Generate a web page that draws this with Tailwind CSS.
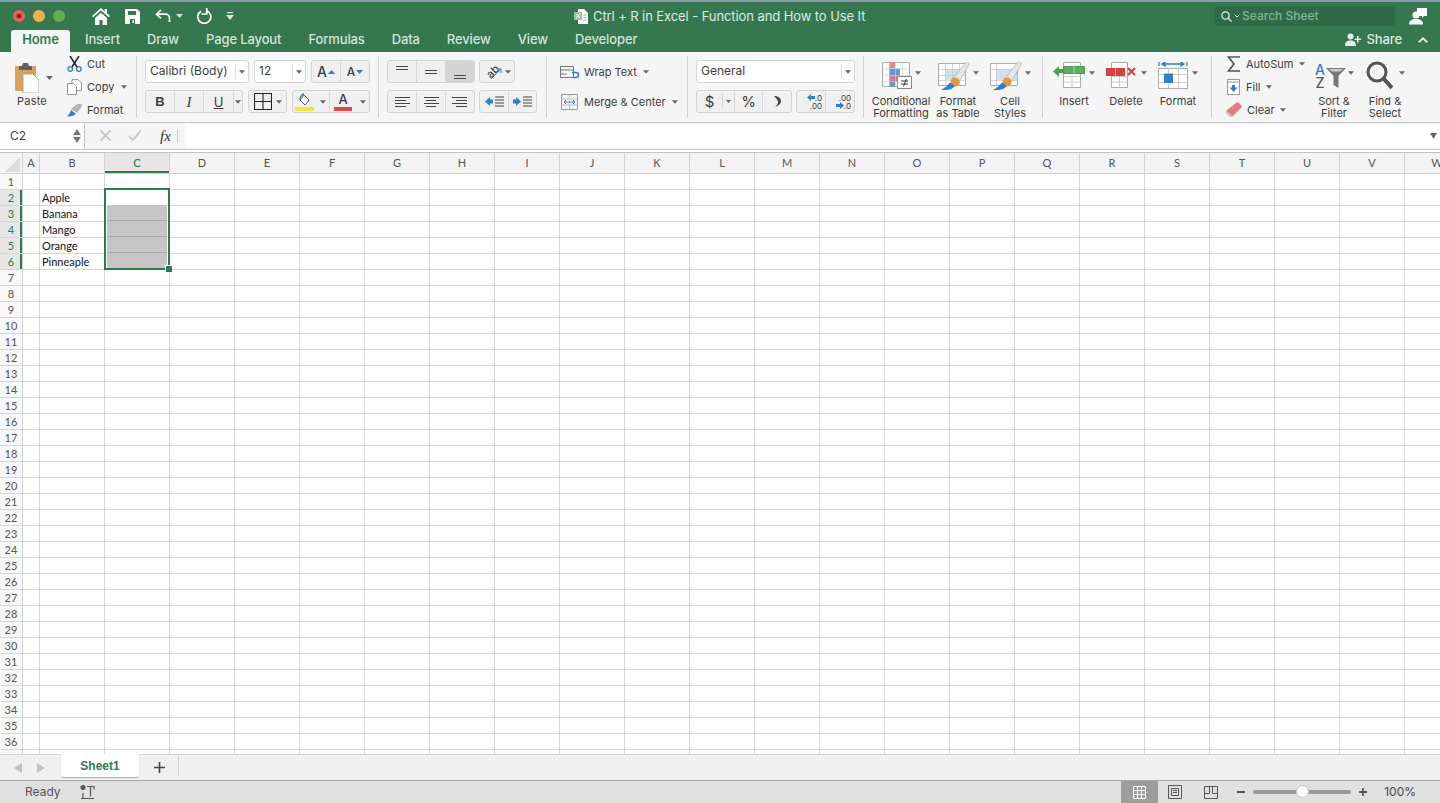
<!DOCTYPE html>
<html lang="en">
<head>
<meta charset="UTF-8" />
<title>Ctrl + R in Excel - Function and How to Use It</title>
<script src="https://cdn.jsdelivr.net/npm/@tailwindcss/browser@4"></script>
</head>
<body class="w-[1440px] h-[803px] overflow-hidden bg-white font-['Inter',sans-serif] text-[#3c3c3c] flex flex-col">

<!-- title bar + tabs -->
<div class="h-[52px] shrink-0 bg-[#35784f] border-t-2 border-[#8a9aa8] flex flex-col text-white">
  <div class="h-[28px] flex items-center">
    <div class="w-[575px] flex items-center">
      <span class="ml-[13px] w-3 h-3 rounded-full bg-[#e0443e] border-[3px] border-[#e8635c] flex items-center justify-center"><span class="w-1 h-1 rounded-full bg-[#7e1a14]"></span></span>
      <span class="ml-2 w-3 h-3 rounded-full bg-[#efb14a]"></span>
      <span class="ml-2 w-3 h-3 rounded-full bg-[#5fb04a]"></span>
      <svg class="ml-[27px] w-[18px] h-[17px]" viewBox="0 0 18 17" fill="#fff"><path d="M9 0 0 8l1.200 1.300L9 2.500l7.800 6.800L18 8l-3-2.700V1h-2.200v2.400zM3 10v7h4.400v-5h3.200v5H15v-7L9 4.700z"/></svg>
      <svg class="ml-[15px] w-[15px] h-[15px]" viewBox="0 0 15 15"><path d="M1 0h11l3 3v11a1 1 0 0 1-1 1H1a1 1 0 0 1-1-1V1a1 1 0 0 1 1-1z" fill="#fff"/><path d="M3 2h8v4H3zM5 10h5v5H5z" fill="#35784f"/><path d="M7.500 11h1.600v3H7.500z" fill="#fff"/></svg>
      <svg class="ml-[15px] w-[16px] h-[14px]" viewBox="0 0 16 14" fill="none" stroke="#fff" stroke-width="1.700"><path d="M6 1 1.500 5.200 6 9.500M2 5.200h8.500a4 4 0 0 1 4 4V13"/></svg>
      <svg class="ml-[5px] w-[7px] h-[4px]" viewBox="0 0 7 4" fill="#cfe0d6"><path d="M0 0h7L3.500 4z"/></svg>
      <svg class="ml-[13px] w-[16px] h-[16px]" viewBox="0 0 16 16" fill="none" stroke="#fff" stroke-width="1.700"><path d="M5 3.200a6.500 6.500 0 1 0 5.500-.5M10.700 0v6H5.500"/></svg>
      <svg class="ml-[14px] w-[8px] h-[8px]" viewBox="0 0 8 8" fill="#dbe8e0"><path d="M1 0h6v1.300H1zM0 3h8L4 8z"/></svg>
    </div>
    <svg class="w-[14px] h-[15px] -ml-[1px] mt-[1px]" viewBox="0 0 14 15"><path d="M4 0h6l4 4v11H4z" fill="#fff"/><path d="M0 3h8v8H0z" fill="#9fc4ae"/><path d="M2 5l4 4M6 5 2 9" stroke="#fff"/><path d="M9.500 6h3M9.500 8.500h3M9.500 11h3" stroke="#9aa"/></svg>
    <span class="ml-[5px] mt-[2px] text-[13px] tracking-[-.09px] text-[#dfeae3] whitespace-nowrap">Ctrl + R in Excel - Function and How to Use It</span>
    <div class="ml-auto w-[180px] h-[20px] rounded-[3px] bg-[#2e6b46] flex items-center pl-[6px]">
      <svg class="w-[11px] h-[11px]" viewBox="0 0 11 11" fill="none" stroke="#e8f0eb" stroke-width="1.200"><circle cx="4.500" cy="4.500" r="3.700"/><path d="m7.200 7.200 3.300 3.300"/></svg>
      <svg class="ml-[2px] w-[6px] h-[4px]" viewBox="0 0 6 4" fill="none" stroke="#e8f0eb"><path d="m.5.500 2.500 2.500L5.500.500"/></svg>
      <span class="ml-[2px] text-[12px] font-medium text-[#7fb697]">Search Sheet</span>
    </div>
    <svg class="ml-[14px] mr-[13px] w-[18px] h-[18px]" viewBox="0 0 18 18" fill="#fff"><path d="M8 1h10v8h-3l-2 2V9H8z"/><circle cx="7" cy="8" r="3.500"/><path d="M0 17.500c0-4 3-5.500 7-5.500s7 1.500 7 5.500z"/></svg>
  </div>
  <div class="h-[22px] flex items-end text-[13px] font-medium tracking-[-.12px] text-[#d5e3da]">
    <div class="ml-[11px] w-[59px] h-[22px] pb-[2px] rounded-t-[3px] bg-[#f5f5f5] text-[#2f7a4f] font-semibold flex items-center justify-center">Home</div>
    <div class="ml-[15px] h-[22px] pb-[2px] flex items-center gap-[27px]">
      <span>Insert</span><span>Draw</span><span>Page Layout</span><span>Formulas</span><span>Data</span><span>Review</span><span>View</span><span>Developer</span>
    </div>
    <div class="ml-auto h-[22px] pb-[3px] flex items-center">
      <svg class="w-[17px] h-[13px]" viewBox="0 0 17 13" fill="#e6efe9"><circle cx="5.500" cy="3.500" r="3"/><path d="M0 13c0-4 2-5.500 5.500-5.500S11 9 11 13zM12 3h1.600v2.400H16V7h-2.400v2.400H12V7H9.600V5.400H12z"/></svg>
      <span class="ml-[5px] text-[#dfeae3]">Share</span>
      <svg class="ml-[16px] mr-[12px] w-[10px] h-[6px]" viewBox="0 0 10 6" fill="none" stroke="#e6efe9" stroke-width="1.800"><path d="m.7 5.300 4.300-4 4.300 4"/></svg>
    </div>
  </div>
</div>

<!-- ribbon -->
<div class="h-[70px] shrink-0 bg-[#f5f5f5] flex text-[11px] leading-[12px] text-[#3c3c3c]">

  <!-- clipboard -->
  <div class="w-[136px] flex">
    <div class="w-[64px] flex flex-col items-center">
      <div class="h-[35px] mt-[8px] w-full pl-[15px] flex items-center">
        <svg class="w-[24px] h-[30px]" viewBox="0 0 24 30"><rect x="0" y="3" width="21" height="25" rx="1" fill="#d9a25c"/><path d="M4 3h3l1-3h5l1 3h3v4H4z" fill="#5f5f5f"/><path d="M8 11h10l6 6v13H8z" fill="#fff" stroke="#999" stroke-width=".8"/></svg>
        <svg class="ml-[7px] w-[7px] h-[4px]" viewBox="0 0 7 4" fill="#666"><path d="M0 0h7L3.500 4z"/></svg>
      </div>
      <span class="tracking-[.2px]">Paste</span>
    </div>
    <div class="flex flex-col pl-[3px]">
      <div class="h-[23px] flex items-center"><svg class="w-[15px] h-[16px]" viewBox="0 0 15 16" fill="none"><path d="M3 0l7 11M12 0 5 11" stroke="#222" stroke-width="1.500"/><circle cx="3.200" cy="13" r="2.300" stroke="#2f7fd0" stroke-width="1.300"/><circle cx="11.800" cy="13" r="2.300" stroke="#2f7fd0" stroke-width="1.300"/></svg><span class="ml-[5px]">Cut</span></div>
      <div class="h-[23px] flex items-center"><svg class="w-[15px] h-[16px]" viewBox="0 0 15 16" fill="#fff" stroke="#8a8a8a" stroke-width=".9"><path d="M5 .500h6l3.500 3.500v7.500H5z"/><path d="M.5 4.500h6l3 3v8h-9z"/></svg><span class="ml-[5px]">Copy</span><svg class="ml-[7px] w-[6px] h-[4px]" viewBox="0 0 7 4" fill="#666"><path d="M0 0h7L3.500 4z"/></svg></div>
      <div class="h-[23px] flex items-center"><svg class="w-[16px] h-[14px]" viewBox="0 0 16 14"><path d="M0 13c2-1 3-3 4-6l5 4c-3 2-6 3-9 2z" fill="#2f7fd0"/><path d="M4 6 10 1l5 0-1 4-4 5z" fill="#b4b4b4"/></svg><span class="ml-[4px]">Format</span></div>
    </div>
  </div>
  <div class="w-px h-[62px] my-[4px] bg-[#d2d2d2]"></div>

  <!-- font -->
  <div class="w-[241px] pl-[8px] pt-[8px] flex flex-col gap-[7px] text-[12px]">
    <div class="h-[23px] flex gap-[5px]">
      <div class="w-[104px] pb-[2px] rounded-[3px] border border-[#d4d4d4] bg-white flex items-center pl-[4px]">Calibri (Body)<span class="ml-auto mt-[2px] w-[13px] h-[15px] border-l border-[#ddd] flex items-center justify-center"><svg class="w-[6px] h-[4px]" viewBox="0 0 7 4" fill="#666"><path d="M0 0h7L3.500 4z"/></svg></span></div>
      <div class="w-[52px] pb-[2px] rounded-[3px] border border-[#d4d4d4] bg-white flex items-center pl-[4px]">12<span class="ml-auto mt-[2px] w-[13px] h-[15px] border-l border-[#ddd] flex items-center justify-center"><svg class="w-[6px] h-[4px]" viewBox="0 0 7 4" fill="#666"><path d="M0 0h7L3.500 4z"/></svg></span></div>
      <div class="w-[59px] rounded-[3px] border border-[#d4d4d4] bg-[#f0f0f0] flex">
        <div class="w-[29px] border-r border-[#d8d8d8] flex items-center justify-center text-[14px] font-medium">A<svg class="ml-[1px] w-[7px] h-[4px]" viewBox="0 0 7 4" fill="#2f7fd0"><path d="M0 4h7L3.500 0z"/></svg></div>
        <div class="flex-1 flex items-center justify-center text-[12px] font-medium">A<svg class="ml-[1px] w-[7px] h-[4px]" viewBox="0 0 7 4" fill="#2f7fd0"><path d="M0 0h7L3.500 4z"/></svg></div>
      </div>
    </div>
    <div class="h-[23px] flex gap-[5px]">
      <div class="w-[98px] rounded-[3px] border border-[#d4d4d4] bg-[#f0f0f0] flex text-[13px]">
        <div class="w-[29px] border-r border-[#d8d8d8] flex items-center justify-center font-bold font-['Liberation_Sans']">B</div>
        <div class="w-[29px] border-r border-[#d8d8d8] flex items-center justify-center italic font-['Liberation_Serif'] text-[15px]">I</div>
        <div class="w-[29px] flex items-center justify-center underline">U</div>
        <div class="flex-1 border-l border-[#d8d8d8] flex items-center justify-center"><svg class="w-[6px] h-[4px]" viewBox="0 0 7 4" fill="#666"><path d="M0 0h7L3.500 4z"/></svg></div>
      </div>
      <div class="w-[39px] rounded-[3px] border border-[#d4d4d4] bg-[#f0f0f0] flex items-center pl-[5px]">
        <svg class="w-[18px] h-[17px]" viewBox="0 0 18 17" fill="none" stroke="#222" stroke-width="1.100"><path d="M.5.500h17v16H.5zM9 .5v16M.5 8.500h17"/></svg>
        <svg class="ml-auto mr-[4px] w-[6px] h-[4px]" viewBox="0 0 7 4" fill="#666"><path d="M0 0h7L3.500 4z"/></svg>
      </div>
      <div class="w-[78px] rounded-[3px] border border-[#d4d4d4] bg-[#f0f0f0] flex">
        <div class="w-[37px] border-r border-[#d8d8d8] flex items-center pl-[2px]">
          <svg class="w-[19px] h-[18px]" viewBox="0 0 19 18"><path d="M9 2l5 5-4 5-5-5z" fill="#fff" stroke="#445" stroke-width=".9"/><path d="M5 7c0-3 2-6 4-6" stroke="#2f7fd0" stroke-width="1.400" fill="none"/><path d="M0 14h19v4H0z" fill="#f2e63c"/></svg>
          <svg class="ml-auto mr-[3px] w-[6px] h-[4px]" viewBox="0 0 7 4" fill="#666"><path d="M0 0h7L3.500 4z"/></svg>
        </div>
        <div class="flex-1 flex items-center pl-[4px]">
          <div class="w-[18px] flex flex-col items-center text-[13px] leading-[13px] font-medium">A<span class="w-[18px] h-[4px] bg-[#e04a46] mt-[1px]"></span></div>
          <svg class="ml-auto mr-[3px] w-[6px] h-[4px]" viewBox="0 0 7 4" fill="#666"><path d="M0 0h7L3.500 4z"/></svg>
        </div>
      </div>
    </div>
  </div>
  <div class="w-px h-[62px] my-[4px] bg-[#d2d2d2]"></div>

  <!-- alignment -->
  <div class="w-[167px] pl-[8px] pt-[8px] flex flex-col gap-[7px]">
    <div class="h-[23px] flex gap-[4px]">
      <div class="w-[88px] rounded-[3px] border border-[#d4d4d4] bg-[#f0f0f0] flex">
        <div class="w-[29px] border-r border-[#d8d8d8] flex flex-col items-center gap-[2px] pt-[5px]"><span class="w-3 h-px bg-[#444]"></span><span class="w-3 h-px bg-[#444]"></span></div>
        <div class="w-[29px] border-r border-[#d8d8d8] flex flex-col items-center justify-center gap-[2px]"><span class="w-3 h-px bg-[#444]"></span><span class="w-3 h-px bg-[#444]"></span></div>
        <div class="flex-1 rounded-r-[3px] bg-[#d4d4d4] flex flex-col items-center justify-end gap-[2px] pb-[3px]"><span class="w-3 h-px bg-[#444]"></span><span class="w-3 h-px bg-[#444]"></span></div>
      </div>
      <div class="w-[36px] rounded-[3px] border border-[#d4d4d4] bg-[#f0f0f0] flex items-center pl-[6px]">
        <div class="relative w-[16px] h-[16px]">
          <span class="block -rotate-45 text-[11px] leading-[13px] text-[#444] font-medium">ab</span>
          <svg class="absolute left-0 top-0 w-[16px] h-[16px]" viewBox="0 0 16 16" fill="none" stroke="#2f7fd0"><path d="M5 15 15 5M11 5h4v4"/></svg>
        </div>
        <svg class="ml-[3px] w-[6px] h-[4px]" viewBox="0 0 7 4" fill="#666"><path d="M0 0h7L3.500 4z"/></svg>
      </div>
    </div>
    <div class="h-[23px] flex gap-[4px]">
      <div class="w-[88px] rounded-[3px] border border-[#d4d4d4] bg-[#f0f0f0] flex">
        <div class="w-[29px] border-r border-[#d8d8d8] flex flex-col items-start justify-center gap-[2px] pl-[7px]"><span class="w-[15px] h-px bg-[#444]"></span><span class="w-[11px] h-px bg-[#444]"></span><span class="w-[15px] h-px bg-[#444]"></span><span class="w-[11px] h-px bg-[#444]"></span></div>
        <div class="w-[29px] border-r border-[#d8d8d8] flex flex-col items-center justify-center gap-[2px]"><span class="w-[15px] h-px bg-[#444]"></span><span class="w-[10px] h-px bg-[#444]"></span><span class="w-[15px] h-px bg-[#444]"></span><span class="w-[10px] h-px bg-[#444]"></span></div>
        <div class="flex-1 flex flex-col items-end justify-center gap-[2px] pr-[7px]"><span class="w-[15px] h-px bg-[#444]"></span><span class="w-[11px] h-px bg-[#444]"></span><span class="w-[15px] h-px bg-[#444]"></span><span class="w-[11px] h-px bg-[#444]"></span></div>
      </div>
      <div class="w-[58px] rounded-[3px] border border-[#d4d4d4] bg-[#f0f0f0] flex">
        <div class="w-[29px] border-r border-[#d8d8d8] flex items-center justify-center"><svg class="w-[19px] h-[11px]" viewBox="0 0 19 11"><path d="M0 5.500 5 1v2.500h3v4H5V10z" fill="#2f7fd0"/><path d="M10 1h9M10 4h9M10 7h9M10 10h9" stroke="#444"/></svg></div>
        <div class="flex-1 flex items-center justify-center"><svg class="w-[19px] h-[11px]" viewBox="0 0 19 11"><path d="M8 5.500 3 1v2.500H0v4h3V10z" fill="#2f7fd0"/><path d="M10 1h9M10 4h9M10 7h9M10 10h9" stroke="#444"/></svg></div>
      </div>
    </div>
  </div>
  <div class="w-px h-[62px] my-[4px] bg-[#d2d2d2]"></div>

  <!-- wrap / merge -->
  <div class="w-[140px] pl-[13px] pt-[8px] flex flex-col gap-[7px]">
    <div class="h-[23px] flex items-center"><svg class="w-[21px] h-[14px]" viewBox="0 0 21 14" fill="none"><path d="M.5 1.500h13v11H.5zM.5 5h13M.5 9h6" stroke="#777"/><path d="M12 7.500h4a2 2 0 0 1 0 5h-3" stroke="#2f7fd0" stroke-width="1.600"/></svg><span class="ml-[3px]">Wrap Text</span><svg class="ml-[6px] w-[6px] h-[4px]" viewBox="0 0 7 4" fill="#666"><path d="M0 0h7L3.500 4z"/></svg></div>
    <div class="h-[23px] flex items-center"><svg class="ml-[1px] w-[17px] h-[16px]" viewBox="0 0 17 16" fill="none"><path d="M.5.500h16v15H.5z" stroke="#999"/><path d="M.5 5h16M.5 11h16M8.500 .5V5M8.500 11v4.500" stroke="#bbb"/><path d="M3.500 8h10M3 8l2-2M3 8l2 2M14 8l-2-2M14 8l-2 2" stroke="#2f7fd0"/></svg><span class="ml-[6px]">Merge &amp; Center</span><svg class="ml-[6px] w-[6px] h-[4px]" viewBox="0 0 7 4" fill="#666"><path d="M0 0h7L3.500 4z"/></svg></div>
  </div>
  <div class="w-px h-[62px] my-[4px] bg-[#d2d2d2]"></div>

  <!-- number -->
  <div class="w-[175px] pl-[8px] pt-[8px] flex flex-col gap-[7px] text-[12px]">
    <div class="w-[159px] h-[23px] pb-[2px] rounded-[3px] border border-[#d4d4d4] bg-white flex items-center pl-[4px]">General<span class="ml-auto mt-[2px] w-[13px] h-[15px] border-l border-[#ddd] flex items-center justify-center"><svg class="w-[6px] h-[4px]" viewBox="0 0 7 4" fill="#666"><path d="M0 0h7L3.500 4z"/></svg></span></div>
    <div class="h-[23px] flex gap-[4px]">
      <div class="w-[96px] rounded-[3px] border border-[#d4d4d4] bg-[#f0f0f0] flex text-[15px]">
        <div class="w-[25px] flex items-center justify-center">$</div>
        <div class="w-[12px] border-l border-[#d8d8d8] my-[3px] flex items-center justify-center"><svg class="w-[5px] h-[3px]" viewBox="0 0 7 4" fill="#666"><path d="M0 0h7L3.500 4z"/></svg></div>
        <div class="w-[29px] border-x border-[#d8d8d8] flex items-center justify-center">%</div>
        <div class="flex-1 flex items-center justify-center"><svg class="w-[7px] h-[11px]" viewBox="0 0 7 11" fill="#444"><path d="M0 0c4 0 7 2 7 5 0 3-3 5-6 6 2-2 3-3 3-5S2 2 0 0z"/></svg></div>
      </div>
      <div class="w-[59px] rounded-[3px] border border-[#d4d4d4] bg-[#f0f0f0] flex text-[8px] leading-[8px]">
        <div class="w-[29px] border-r border-[#d8d8d8] flex flex-col justify-center items-end pr-[3px]"><span class="flex items-center"><svg class="w-[8px] h-[7px]" viewBox="0 0 8 7" fill="#2f7fd0"><path d="M0 3.500 4 0v2h4v3H4v2z"/></svg>.0</span><span>.00</span></div>
        <div class="flex-1 flex flex-col justify-center items-end pr-[3px]"><span>.00</span><span class="flex items-center"><svg class="w-[8px] h-[7px]" viewBox="0 0 8 7" fill="#2f7fd0"><path d="M8 3.500 4 0v2H0v3h4v2z"/></svg>.0</span></div>
      </div>
    </div>
  </div>
  <div class="w-px h-[62px] my-[4px] bg-[#d2d2d2]"></div>

  <!-- styles -->
  <div class="w-[178px] pl-[7px] flex text-center">
    <div class="w-[60px] flex flex-col items-center">
      <div class="h-[35px] mt-[8px] flex items-start gap-[3px]">
        <svg class="mt-[2px] w-[30px] h-[27px]" viewBox="0 0 30 27"><path d="M.5.500h27v24H.5z" fill="#fff" stroke="#aaa"/><path d="M7 .5h6v6H7z" fill="#dd8c88"/><path d="M7 6.500h11V14H7z" fill="#5b9bdc"/><path d="M7 14h11v6H7z" fill="#dd7c78"/><path d="M7 20h6v4.500H7z" fill="#5b9bdc"/><path d="M7.500.5v24M13.500.5v24M20.500.5v24M.5 6.500h27M.5 13.500h27M.5 19.500h27" stroke="#ccc" stroke-width=".7" fill="none"/><path d="M15.500 14.500h14v12h-14z" fill="#fff" stroke="#888"/><path d="M19 19h7M19 22h7M24.500 17l-3 7.500" stroke="#333" fill="none"/></svg>
        <svg class="mt-[11px] w-[6px] h-[4px]" viewBox="0 0 7 4" fill="#666"><path d="M0 0h7L3.500 4z"/></svg>
      </div>
      <span>Conditional Formatting</span>
    </div>
    <div class="w-[54px] flex flex-col items-center">
      <div class="h-[35px] mt-[8px] flex items-start gap-[3px]">
        <svg class="mt-[2px] w-[32px] h-[28px]" viewBox="0 0 32 28"><path d="M.5 1.500h27v22H.5z" fill="#fff" stroke="#aaa"/><path d="M7 7h14v11H7z" fill="#cfe2ee"/><path d="M7.500 1.500v22M14.500 1.500v22M21.500 1.500v22M.5 7.500h27M.5 13.500h27M.5 18.500h27" stroke="#c4c4c4" stroke-width=".7" fill="none"/><path d="M28 0c2-.5 3 .5 3 2.500L21 20l-6-3.500z" fill="#e6e6e6" stroke="#a0a0a0" stroke-width=".6"/><circle cx="17" cy="20" r="4.500" fill="#e39a3c"/><path d="M3 28c5 .5 11 0 14-4l-5-3.500C10 23 7 26 3 28z" fill="#2f7fd0"/></svg>
        <svg class="mt-[11px] w-[6px] h-[4px]" viewBox="0 0 7 4" fill="#666"><path d="M0 0h7L3.500 4z"/></svg>
      </div>
      <span>Format<br />as Table</span>
    </div>
    <div class="w-[50px] flex flex-col items-center">
      <div class="h-[35px] mt-[8px] flex items-start gap-[3px]">
        <svg class="mt-[2px] w-[32px] h-[28px]" viewBox="0 0 32 28"><path d="M.5 1.500h27v22H.5z" fill="#fff" stroke="#aaa"/><path d="M6 7h21v11H6z" fill="#cfe2ee"/><path d="M.5 7.500h27M.5 18.500h27M6.500 1.500v22" stroke="#c4c4c4" stroke-width=".7" fill="none"/><path d="M28 0c2-.5 3 .5 3 2.500L21 20l-6-3.500z" fill="#e6e6e6" stroke="#a0a0a0" stroke-width=".6"/><circle cx="17" cy="20" r="4.500" fill="#e39a3c"/><path d="M3 28c5 .5 11 0 14-4l-5-3.500C10 23 7 26 3 28z" fill="#2f7fd0"/></svg>
        <svg class="mt-[11px] w-[6px] h-[4px]" viewBox="0 0 7 4" fill="#666"><path d="M0 0h7L3.500 4z"/></svg>
      </div>
      <span>Cell<br />Styles</span>
    </div>
  </div>
  <div class="w-px h-[62px] my-[4px] bg-[#d2d2d2]"></div>

  <!-- cells -->
  <div class="w-[168px] pl-[5px] flex text-center">
    <div class="w-[52px] flex flex-col items-center">
      <div class="h-[35px] mt-[8px] flex items-start gap-[4px]">
        <svg class="w-[32px] h-[26px] mt-[2px]" viewBox="0 0 32 26"><path d="M10.500.5h17v25h-17z" fill="#fff" stroke="#aaa"/><path d="M10.500 14.500h17M10.500 20h17M19 14.500v11" stroke="#ccc"/><path d="M0 9.500 6 4v3h4V4h22v8H10v-1H6v4z" fill="#4ca04e"/><path d="M11.500 5h19v6h-19z" fill="#5fae5f"/><path d="M21 4v8" stroke="#a8d8a8"/></svg>
        <svg class="mt-[11px] w-[6px] h-[4px]" viewBox="0 0 7 4" fill="#666"><path d="M0 0h7L3.500 4z"/></svg>
      </div>
      <span>Insert</span>
    </div>
    <div class="w-[52px] flex flex-col items-center">
      <div class="h-[35px] mt-[8px] flex items-start gap-[5px]">
        <svg class="w-[30px] h-[26px] mt-[2px]" viewBox="0 0 30 26"><path d="M5.500.5h16v25h-16z" fill="#fff" stroke="#aaa"/><path d="M5.500 14.500h16M5.500 20h16M13.500 14.500v11" stroke="#ccc"/><path d="M0 6h19v8H0z" fill="#d8413e"/><path d="M9.500 6v8" stroke="#eea0a0"/><path d="M22 6l7 7M29 6l-7 7" stroke="#d8413e" stroke-width="2.200"/></svg>
        <svg class="mt-[11px] w-[6px] h-[4px]" viewBox="0 0 7 4" fill="#666"><path d="M0 0h7L3.500 4z"/></svg>
      </div>
      <span>Delete</span>
    </div>
    <div class="w-[52px] flex flex-col items-center">
      <div class="h-[35px] mt-[8px] flex items-start gap-[4px]">
        <svg class="w-[30px] h-[27px] mt-[2px]" viewBox="0 0 30 27"><path d="M.5 6.500h29v20H.5z" fill="#fff" stroke="#aaa"/><path d="M10.500 6.500v20M20.500 6.500v20M.5 12.500h29M.5 20.500h29" stroke="#ccc" fill="none"/><path d="M6 11.500h9v9.500H6z" fill="#2f7fd0"/><path d="M1 0v4M29 0v4M4 2h22M4 2l3-2v4zM26 2l-3-2v4z" stroke="#2f7fd0" stroke-width="1.300"/></svg>
        <svg class="mt-[11px] w-[6px] h-[4px]" viewBox="0 0 7 4" fill="#666"><path d="M0 0h7L3.500 4z"/></svg>
      </div>
      <span>Format</span>
    </div>
  </div>
  <div class="w-px h-[62px] my-[4px] bg-[#d2d2d2]"></div>

  <!-- editing -->
  <div class="flex-1 flex text-center">
    <div class="w-[100px] pl-[15px] flex flex-col text-left">
      <div class="h-[23px] flex items-center"><svg class="w-[13px] h-[16px]" viewBox="0 0 13 16" fill="none" stroke="#555" stroke-width="1.700"><path d="M13 1H1.500L7 8l-5.500 7H13"/></svg><span class="ml-[6px]">AutoSum</span><svg class="ml-[6px] w-[6px] h-[4px]" viewBox="0 0 7 4" fill="#666"><path d="M0 0h7L3.500 4z"/></svg></div>
      <div class="h-[23px] flex items-center"><svg class="w-[13px] h-[16px]" viewBox="0 0 13 16"><path d="M.5.500h12v15H.5z" fill="#fff" stroke="#999"/><path d="M.5 3h12" stroke="#999"/><path d="M6.500 13 2.500 8.500H5V6h3v2.500h2.500z" fill="#2f7fd0"/></svg><span class="ml-[6px]">Fill</span><svg class="ml-[5px] w-[6px] h-[4px]" viewBox="0 0 7 4" fill="#666"><path d="M0 0h7L3.500 4z"/></svg></div>
      <div class="h-[23px] flex items-center"><svg class="-ml-[1px] w-[16px] h-[16px]" viewBox="0 0 16 16"><path d="M10 1c1-1 2-1 3 0l2 2c1 1 1 2 0 3l-8 8c-1 1-3 1-4 0l-2-2c-1-1-1-3 0-4z" fill="#e0807e"/><path d="M6 14 1 9l-.5 2.500L4 15z" fill="#c9c9c9"/></svg><span class="ml-[5px]">Clear</span><svg class="ml-[5px] w-[6px] h-[4px]" viewBox="0 0 7 4" fill="#666"><path d="M0 0h7L3.500 4z"/></svg></div>
    </div>
    <div class="w-[44px] flex flex-col items-center">
      <div class="h-[35px] mt-[8px] flex items-start">
        <div class="flex flex-col items-center mt-[3px] text-[14px] leading-[13px] w-[12px]"><span class="text-[#2f7fd0] font-medium">A</span><span class="font-medium text-[#555]">Z</span></div>
        <svg class="mt-[8px] w-[20px] h-[20px]" viewBox="0 0 20 20" fill="#777"><path d="M0 0h20l-7.500 8v12l-5-3V8z"/><path d="M3 1h14l-3 2.500H6z" fill="#ccc"/></svg>
        <svg class="mt-[11px] ml-[2px] w-[6px] h-[4px]" viewBox="0 0 7 4" fill="#666"><path d="M0 0h7L3.500 4z"/></svg>
      </div>
      <span>Sort &amp;<br />Filter</span>
    </div>
    <div class="ml-[4px] w-[50px] flex flex-col items-center">
      <div class="h-[35px] mt-[8px] flex items-start">
        <svg class="mt-[1px] w-[27px] h-[29px]" viewBox="0 0 27 29" fill="none" stroke="#555"><circle cx="11" cy="11" r="9" stroke-width="3"/><path d="M18 18l8 9" stroke-width="4"/></svg>
        <svg class="mt-[11px] ml-[6px] w-[6px] h-[4px]" viewBox="0 0 7 4" fill="#666"><path d="M0 0h7L3.500 4z"/></svg>
      </div>
      <span>Find &amp;<br />Select</span>
    </div>
  </div>
</div>

<!-- formula bar -->
<div class="h-[28px] shrink-0 border-y border-[#c4c4c4] bg-[#f5f5f5] flex items-stretch">
  <div class="w-[85px] bg-white border-r border-[#c4c4c4] flex items-center pl-[10px] text-[12px]">C2
    <div class="ml-auto mr-[3px] flex flex-col gap-[2px]"><svg class="w-[8px] h-[6px]" viewBox="0 0 8 6" fill="#777"><path d="M0 6h8L4 0z"/></svg><svg class="w-[8px] h-[6px]" viewBox="0 0 8 6" fill="#777"><path d="M0 0h8L4 6z"/></svg></div>
  </div>
  <svg class="ml-[15px] mt-[7px] w-[11px] h-[11px]" viewBox="0 0 11 11" stroke="#c6c6c6" stroke-width="1.800"><path d="m.5.500 10 10M10.500.5l-10 10"/></svg>
  <svg class="ml-[17px] mt-[7px] w-[14px] h-[11px]" viewBox="0 0 14 11" fill="none" stroke="#c6c6c6" stroke-width="1.800"><path d="m1 6 4 4 8-9.500"/></svg>
  <span class="ml-[18px] mt-[4px] text-[15px] leading-[18px] italic font-['Liberation_Serif'] text-[#333]">fx</span>
  <div class="ml-[6px] my-[6px] w-px bg-[#ccc]"></div>
  <div class="flex-1 my-[1px] ml-[7px] bg-white flex items-center justify-end pr-[3px]"><svg class="w-[7px] h-[6px]" viewBox="0 0 7 6" fill="#666"><path d="M0 0h7L3.500 6z"/></svg></div>
</div>

<!-- sheet -->
<div class="h-[2px] shrink-0"></div>
<div class="h-[602px] shrink-0 border-t border-[#c4c4c4] flex flex-col font-['Lato',sans-serif] text-[11px] overflow-hidden">
  <div class="h-[21px] shrink-0 flex bg-[#f3f3f3] border-b border-[#d2d2d2] text-center leading-[20px] text-[#555]">
    <div class="w-[23px] shrink-0 border-r border-[#d2d2d2] flex items-end justify-end pr-[2px] pb-[1px]"><svg class="w-[15px] h-[15px]" viewBox="0 0 15 15" fill="#dcdcdc"><path d="M15 0v15H0z"/></svg></div>
    <div class="w-[17px] shrink-0 border-r border-[#d2d2d2]">A</div>
    <div class="w-[65px] shrink-0 border-r border-[#d2d2d2]">B</div>
    <div class="w-[65px] shrink-0 border-r border-[#d2d2d2] bg-[#e6e6e6] text-[#2f7a4f] font-medium shadow-[inset_0_-2px_0_#2f7a4f]">C</div>
    <div class="w-[65px] shrink-0 border-r border-[#d2d2d2]">D</div>
    <div class="w-[65px] shrink-0 border-r border-[#d2d2d2]">E</div>
    <div class="w-[65px] shrink-0 border-r border-[#d2d2d2]">F</div>
    <div class="w-[65px] shrink-0 border-r border-[#d2d2d2]">G</div>
    <div class="w-[65px] shrink-0 border-r border-[#d2d2d2]">H</div>
    <div class="w-[65px] shrink-0 border-r border-[#d2d2d2]">I</div>
    <div class="w-[65px] shrink-0 border-r border-[#d2d2d2]">J</div>
    <div class="w-[65px] shrink-0 border-r border-[#d2d2d2]">K</div>
    <div class="w-[65px] shrink-0 border-r border-[#d2d2d2]">L</div>
    <div class="w-[65px] shrink-0 border-r border-[#d2d2d2]">M</div>
    <div class="w-[65px] shrink-0 border-r border-[#d2d2d2]">N</div>
    <div class="w-[65px] shrink-0 border-r border-[#d2d2d2]">O</div>
    <div class="w-[65px] shrink-0 border-r border-[#d2d2d2]">P</div>
    <div class="w-[65px] shrink-0 border-r border-[#d2d2d2]">Q</div>
    <div class="w-[65px] shrink-0 border-r border-[#d2d2d2]">R</div>
    <div class="w-[65px] shrink-0 border-r border-[#d2d2d2]">S</div>
    <div class="w-[65px] shrink-0 border-r border-[#d2d2d2]">T</div>
    <div class="w-[65px] shrink-0 border-r border-[#d2d2d2]">U</div>
    <div class="w-[65px] shrink-0 border-r border-[#d2d2d2]">V</div>
    <div class="w-[65px] shrink-0 border-r border-[#d2d2d2]">W</div>
  </div>
  <div class="flex-1 flex min-h-0">
    <div class="w-[23px] shrink-0 bg-[#f8f8f8] border-r border-[#d2d2d2] text-center leading-[15px] text-[#555]">
      <div class="h-4 border-b border-[#d6d6d6]">1</div>
      <div class="h-4 border-b border-[#d6d6d6] bg-[#e6e6e6] text-[#2f7a4f] shadow-[inset_-2px_0_0_#2f7a4f]">2</div>
      <div class="h-4 border-b border-[#d6d6d6] bg-[#e6e6e6] text-[#2f7a4f] shadow-[inset_-2px_0_0_#2f7a4f]">3</div>
      <div class="h-4 border-b border-[#d6d6d6] bg-[#e6e6e6] text-[#2f7a4f] shadow-[inset_-2px_0_0_#2f7a4f]">4</div>
      <div class="h-4 border-b border-[#d6d6d6] bg-[#e6e6e6] text-[#2f7a4f] shadow-[inset_-2px_0_0_#2f7a4f]">5</div>
      <div class="h-4 border-b border-[#d6d6d6] bg-[#e6e6e6] text-[#2f7a4f] shadow-[inset_-2px_0_0_#2f7a4f]">6</div>
      <div class="h-4 border-b border-[#d6d6d6]">7</div>
      <div class="h-4 border-b border-[#d6d6d6]">8</div>
      <div class="h-4 border-b border-[#d6d6d6]">9</div>
      <div class="h-4 border-b border-[#d6d6d6]">10</div>
      <div class="h-4 border-b border-[#d6d6d6]">11</div>
      <div class="h-4 border-b border-[#d6d6d6]">12</div>
      <div class="h-4 border-b border-[#d6d6d6]">13</div>
      <div class="h-4 border-b border-[#d6d6d6]">14</div>
      <div class="h-4 border-b border-[#d6d6d6]">15</div>
      <div class="h-4 border-b border-[#d6d6d6]">16</div>
      <div class="h-4 border-b border-[#d6d6d6]">17</div>
      <div class="h-4 border-b border-[#d6d6d6]">18</div>
      <div class="h-4 border-b border-[#d6d6d6]">19</div>
      <div class="h-4 border-b border-[#d6d6d6]">20</div>
      <div class="h-4 border-b border-[#d6d6d6]">21</div>
      <div class="h-4 border-b border-[#d6d6d6]">22</div>
      <div class="h-4 border-b border-[#d6d6d6]">23</div>
      <div class="h-4 border-b border-[#d6d6d6]">24</div>
      <div class="h-4 border-b border-[#d6d6d6]">25</div>
      <div class="h-4 border-b border-[#d6d6d6]">26</div>
      <div class="h-4 border-b border-[#d6d6d6]">27</div>
      <div class="h-4 border-b border-[#d6d6d6]">28</div>
      <div class="h-4 border-b border-[#d6d6d6]">29</div>
      <div class="h-4 border-b border-[#d6d6d6]">30</div>
      <div class="h-4 border-b border-[#d6d6d6]">31</div>
      <div class="h-4 border-b border-[#d6d6d6]">32</div>
      <div class="h-4 border-b border-[#d6d6d6]">33</div>
      <div class="h-4 border-b border-[#d6d6d6]">34</div>
      <div class="h-4 border-b border-[#d6d6d6]">35</div>
      <div class="h-4 border-b border-[#d6d6d6]">36</div>
    </div>
    <div class="relative flex-1 bg-white bg-[linear-gradient(to_right,#d6d6d6_1px,transparent_1px),linear-gradient(to_bottom,#d6d6d6_1px,transparent_1px)] bg-[size:65px_16px] bg-[position:16px_15px] pl-[19px] pt-[16px] leading-[16px] text-[#111]">
      <div class="h-4">Apple</div>
      <div class="h-4">Banana</div>
      <div class="h-4">Mango</div>
      <div class="h-4">Orange</div>
      <div class="h-4">Pinneaple</div>
      <!-- selection C2:C6 -->
      <div class="absolute left-[81px] top-[14px] w-[66px] h-[82px] border-2 border-[#2f7a4f] bg-white px-px pb-px">
        <div class="mt-[15px] bg-[#c6c6c6]">
          <div class="h-4 border-b border-[#a8a8a8]"></div>
          <div class="h-4 border-b border-[#a8a8a8]"></div>
          <div class="h-4 border-b border-[#a8a8a8]"></div>
          <div class="h-[15px]"></div>
        </div>
        <span class="absolute -right-[4px] -bottom-[4px] w-[6px] h-[6px] bg-[#2f7a4f] border-l border-t border-white box-content"></span>
      </div>
    </div>
  </div>
</div>

<!-- sheet tabs -->
<div class="h-[26px] shrink-0 bg-[#f0f0f0] border-t border-[#d6d6d6] flex items-start">
  <svg class="ml-[14px] mt-[8px] w-[8px] h-[10px]" viewBox="0 0 8 10" fill="#c0c0c0"><path d="M8 0v10L0 5z"/></svg>
  <svg class="ml-[15px] mt-[8px] w-[8px] h-[10px]" viewBox="0 0 8 10" fill="#c0c0c0"><path d="M0 0v10l8-5z"/></svg>
  <div class="ml-[16px] -mt-px w-[78px] h-[23px] bg-white rounded-b-[3px] shadow-[0_1px_1px_#aaa] flex items-center justify-center font-['Liberation_Sans'] font-bold text-[12px] text-[#2f7a4f]">Sheet1</div>
  <svg class="ml-[15px] mt-[7px] w-[11px] h-[11px]" viewBox="0 0 11 11" stroke="#444" stroke-width="1.600"><path d="M5.500 0v11M0 5.500h11"/></svg>
  <div class="ml-[13px] w-px h-[21px] bg-[#d4d4d4]"></div>
</div>

<!-- status bar -->
<div class="flex-1 border-t border-[#a8a8a8] bg-[#e0e0e0] flex items-center text-[12px] text-[#555]">
  <span class="ml-[25px]">Ready</span>
  <svg class="ml-[19px] w-[15px] h-[15px]" viewBox="0 0 15 15" fill="none" stroke="#555" stroke-width="1.200"><circle cx="3" cy="2.500" r="2" fill="#555"/><path d="M7 1.500h7v3M10.500 1.500v10M3 8v5.500h11M1 13.500h3"/></svg>
  <div class="ml-auto w-[37px] h-full bg-[#9d9d9d] flex items-center justify-center"><svg class="w-[13px] h-[13px]" viewBox="0 0 13 13" fill="none" stroke="#fff"><path d="M.5.500h12v12H.5zM4.500.5v12M8.500.5v12M.5 4.500h12M.5 8.500h12"/></svg></div>
  <svg class="ml-[10px] w-[14px] h-[14px]" viewBox="0 0 14 14" fill="none" stroke="#555"><path d="M.5.500h13v13H.5zM3.500 3.500h7v7h-7zM5 5.500h4M5 7.500h4"/></svg>
  <svg class="ml-[22px] w-[14px] h-[13px]" viewBox="0 0 14 13" fill="none" stroke="#555"><path d="M.5.500h13v12H.5zM.5 7.500h5M5.500.5v7M8.500.5v7M8.500 7.500h5"/></svg>
  <span class="ml-[19px] w-[8px] h-[2px] bg-[#555]"></span>
  <div class="ml-[8px] w-[98px] h-[4px] rounded-full bg-[#9a9a9a] relative"><span class="absolute left-[43px] -top-[5px] w-[13px] h-[13px] rounded-full bg-white border border-[#c4c4c4]"></span></div>
  <svg class="ml-[8px] w-[8px] h-[8px]" viewBox="0 0 8 8" stroke="#555" stroke-width="1.800"><path d="M4 0v8M0 4h8"/></svg>
  <span class="ml-[17px] mr-[24px] text-[#444]">100%</span>
</div>
</body>
</html>
